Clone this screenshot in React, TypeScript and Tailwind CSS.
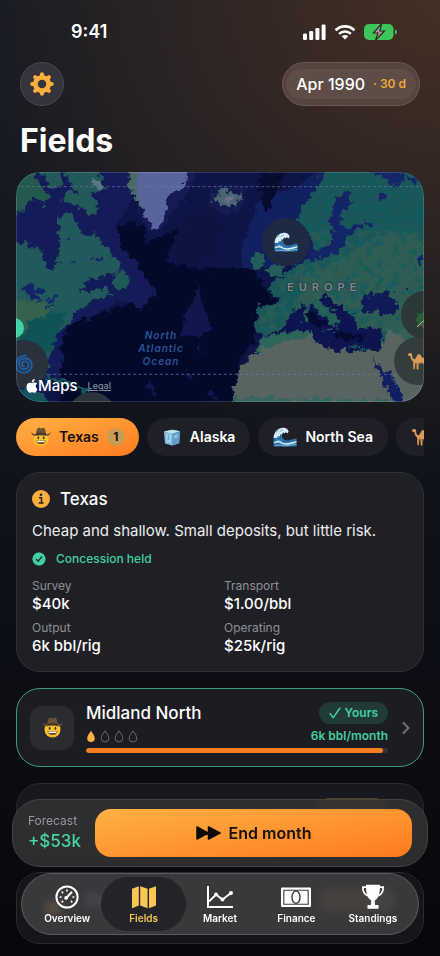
import type { ReactNode } from "react";

interface IconProps {
  className?: string;
}

const Cowboy = ({ className }: IconProps) => (
  <svg viewBox="0 0 20 20" className={className} aria-hidden="true">
    <circle cx="10" cy="12" r="7.6" fill="#f7c331" />
    <path d="M3 14a7.6 7.6 0 0 0 14 0c-1 3-4 4.200-7 4.200S4 17 3 14z" fill="#dd9420" />
    <path d="M.4 5.200c1.400 1.600 3.300 2 4.600 1.800C5.300 3.400 6.200.8 7.600.8c.9 0 1.500.6 2.400.6s1.500-.6 2.400-.6c1.400 0 2.300 2.600 2.600 6.200 1.300.2 3.200-.2 4.600-1.800.2 2.400-2.600 4-5.200 3.600-2.800-.5-6-.5-8.800 0C3 9.200.2 7.600.4 5.200z" fill="#6b5236" />
    <path d="M5 6.600c3-.9 7-.9 10 0v1.200c-3-.8-7-.8-10 0z" fill="#3c2c1d" />
    <ellipse cx="7.300" cy="10.800" rx=".9" ry="1.500" fill="#5a3a10" />
    <ellipse cx="12.700" cy="10.800" rx=".9" ry="1.500" fill="#5a3a10" />
    <path d="M5.200 13.400h9.600c-.4 2.500-2.200 3.700-4.800 3.700s-4.400-1.200-4.800-3.700z" fill="#6d4310" />
    <path d="M5.900 13.800h8.200l-.6 1.400h-7z" fill="#fff" />
  </svg>
);

const Wave = ({ className }: IconProps) => (
  <svg viewBox="0 0 24 20" className={className} aria-hidden="true">
    <path d="M.5 19.500V11C1.200 4 6 .4 11 .8c2.400.2 4.200 1.800 4.600 4l-2 .6C11 4.600 8.800 6 9 9c.2 3 3 4.800 6.600 4.400 2.800-.3 5-2 8-1.800v7.900z" fill="#2c6eaa" />
    <path d="M.5 11C1.200 4 6 .4 11 .8c2.400.2 4.200 1.800 4.600 4l-1.200 1.600-1.500-1.300-1.300 1.400-1.600-1.200-1 2.200-1.800-.3-.4 2.300-2-.2-.8 2-1.600-.6z" fill="#d8edf5" />
    <path d="M3 5.400l3-2.600M6.500 4.800L10 2.600" stroke="#5c9fc9" strokeWidth=".8" fill="none" />
    <path d="M1 16c3-2 5-1.600 8 .2 4 2 8 .4 14.500-1.600" stroke="#d5edf7" strokeWidth="1.500" fill="none" />
    <path d="M2 18.600c5-1.200 8 .6 12 .2 4-.6 6-1.400 9.500-1.400" stroke="#7db9db" strokeWidth="1" fill="none" />
    <path d="M4 12.600c1 1.200 3 1.800 4.400 1.600" stroke="#8ec6e2" strokeWidth="1" fill="none" />
  </svg>
);

const Ice = ({ className }: IconProps) => (
  <svg viewBox="0 0 20 20" className={className} aria-hidden="true">
    <path d="M2 4.400l8.500-1.600L18 4.200l-.8 12L10 18.600 3 16.400z" fill="#86bddd" />
    <path d="M2 4.400l8.500-1.600L18 4.200 10.600 6.400z" fill="#c2e3f2" />
    <path d="M10.600 6.400L18 4.200l-.8 12-7.200 2.400z" fill="#5f9cc8" />
    <path d="M4 7l5 1-.4 7.400L4.600 14z" fill="#a9d5ea" />
    <path d="M12 8.400l4.200-1.400-.4 3.400-3.600 1z" fill="#8ec4e2" />
    <path d="M5 11.600l3 .6M6.400 7.600v5" stroke="#5c9bc6" strokeWidth=".8" />
  </svg>
);

const Camel = ({ className }: IconProps) => (
  <svg viewBox="0 0 22 20" className={className} aria-hidden="true">
    <path d="M1 3.200C2 1.600 4.400 1.500 5 3c.4 1.200 0 3.600 1.200 4.800.8.8 1.600.4 2.400-.4 1-1.600 1.600-4.200 3.200-4.400 1.800-.2 2.600 3.400 4.600 4 2.400.6 4 1.800 4 4.600l-.6 2-.6-1.800-.6 1 .6 5.600h-1.600l-.8-5.400-1.800-1.400-3.400.6-.2 6.200H9.800l-.4-6-1-.6-.6 6.400H6.400l-.2-7.400C4.200 9.400 3.600 7.200 3.400 5L1.200 4.800z" fill="#dc9a58" />
    <path d="M8 11.600c3 1.400 6 1 9-.4l-1 1.400-3.400.6-3.200.4z" fill="#ab6c36" />
  </svg>
);

const Cyclone = ({ className }: IconProps) => (
  <svg viewBox="0 0 20 20" className={className} fill="none" stroke="#1f5fa5" strokeWidth="1.900" strokeLinecap="round" aria-hidden="true">
    <path d="M12 1.400C6 1.400 2.600 5 2.600 9.600M2 11.400c0 4.400 3.400 7.200 7.800 7.200 4.600 0 8-3.200 8-7.600 0-4-3-6.800-6.800-6.800C7.400 4.200 5 6.800 5 10c0 3 2.200 5.200 5 5.200 2.600 0 4.600-1.800 4.600-4.200 0-2.200-1.600-3.600-3.600-3.600-1.800 0-3 1.200-3 2.800 0 1.400 1 2.200 2.200 2.200" />
  </svg>
);

const Palm = ({ className }: IconProps) => (
  <svg viewBox="0 0 20 20" className={className} aria-hidden="true">
    <path d="M0 10l3-2-1-4 4 1 3-4 1 4 4 1-3 3 1 4-3 1 0 4-3-1-4 1 1-4z" fill="#2f5c38" />
    <path d="M2 18L15 6" stroke="#b9b7a3" strokeWidth="1" />
    <path d="M6 17l12-6v8H8z" fill="#6c423c" />
  </svg>
);

/* map, drawn on a 1224 x 690 canvas */
const WorldMap = () => (
  <svg viewBox="48 21 1224 690" preserveAspectRatio="xMidYMid slice" className="block h-full w-full" aria-hidden="true">
    <defs>
      <filter id="coast" x="-5%" y="-5%" width="110%" height="110%" colorInterpolationFilters="sRGB">
        <feTurbulence type="fractalNoise" baseFrequency="0.05" numOctaves="4" seed="4" result="n" />
        <feDisplacementMap in="SourceGraphic" in2="n" scale="36" xChannelSelector="R" yChannelSelector="G" />
      </filter>
      <filter id="patches" x="0" y="0" width="100%" height="100%" colorInterpolationFilters="sRGB">
        <feTurbulence type="fractalNoise" baseFrequency="0.035" numOctaves="4" seed="9" />
        <feColorMatrix values="0 0 0 0 0.19  0 0 0 0 0.38  0 0 0 0 0.33  16 0 0 0 -7.4" />
      </filter>
      <filter id="teal" x="0" y="0" width="100%" height="100%" colorInterpolationFilters="sRGB">
        <feTurbulence type="fractalNoise" baseFrequency="0.04" numOctaves="4" seed="21" />
        <feColorMatrix values="0 0 0 0 0.05  0 0 0 0 0.37  0 0 0 0 0.38  12 0 0 0 -6.8" />
      </filter>
      <clipPath id="europe">
        <path d="M985 21 940 80 895 150 905 190 935 220 950 285 890 305 835 355 850 415 780 430 780 500 1272 500 1272 21z" />
      </clipPath>
    </defs>
    <rect x="0" y="0" width="1320" height="740" fill="#0c1546" />
    <g filter="url(#coast)">
      <path d="M20 0H410L400 100 350 185 362 235 405 290 445 345 472 375 440 415 410 435 370 405 300 440 215 480 190 540 190 640 20 740z" fill="#131c58" />
      <path d="M400 90 440 190 480 200 530 130 580 60 600 0H380z" fill="#131c55" />
      <path d="M640 60 740 60 730 130 680 150 620 130z" fill="#131c50" />
      <path d="M780 100 900 60 980 0 1100 0 1000 300 800 300 730 330 720 260z" fill="#13205f" />
      <path d="M350 185 390 170 435 190 440 235 500 205 540 190 515 240 500 290 590 310 660 310 760 310 810 390 830 415 765 420 765 530 710 590 700 730H180L185 520 215 475 300 445 400 412 420 438 470 380 440 340 400 280 360 235z" fill="#020a2c" />
      <path d="M510 245 560 150 640 130 680 190 650 270 590 305 530 290z" fill="#0e1342" />
      <path d="M780 21H860L820 100 800 145 785 120z" fill="#060c30" />
      <path d="M590 345 610 420 635 490 600 520 555 505 540 530 560 440 585 400z" fill="#11174c" />
      <path d="M590 540 600 560M445 650 460 690M630 680 645 700M560 620 575 640" stroke="#11174c" strokeWidth="14" />
    </g>

    {/* north america */}
    <g filter="url(#coast)">
      <path d="M20 235H80L130 260 140 310 165 320 170 270 185 240 175 200 180 150 210 145 240 190 270 220 285 195 310 240 345 275 362 300 355 325 310 335 260 345 235 380 270 378 320 365 335 385 300 400 250 425 215 460 190 490 165 525 150 560 152 610 138 605 128 565 20 565z" fill="#22595a" />
      <path d="M20 430 90 410 160 440 200 440 165 530 150 560H20z" fill="#105356" />
      <path d="M20 410 130 410 160 430 140 450 90 470 60 520 20 520z" fill="#34624f" />
      <path d="M20 10H100L110 45 145 90 130 125 100 95 62 140 20 150z" fill="#24594f" />
      <path d="M120 10H180L190 60 150 70z" fill="#22585a" />
      <path d="M195 10 290 10 315 65 275 90 297 130 285 158 240 130 210 112 180 112 195 82 230 80 205 50z" fill="#24595a" />
      <path d="M270 35 310 55 305 75 280 60z" fill="#5b7686" />
      <path d="M340 355 362 315 388 345 385 375 345 370z" fill="#1f5a58" />
      <path d="M60 372 100 355 112 372 140 382 110 390 130 412 102 402 95 418 85 390z" fill="#15246a" />
      <path d="M140 408 175 398M135 432 165 420M180 290 190 300M210 285 225 290M270 285 280 278M290 280 300 290M200 220 210 226" stroke="#15246a" strokeWidth="7" />
      <path d="M240 380 270 352 310 345 300 360 280 370z" fill="#101c58" />
      <path d="M130 630 180 645 225 655 200 662 150 648zM235 665 275 668 270 682 240 676z" fill="#14585a" />
      <path d="M20 670 100 675 140 700V740H20z" fill="#13555a" />
    </g>

    {/* greenland, iceland */}
    <g filter="url(#coast)">
      <path d="M388 0H430L422 130 400 90 385 60z" fill="#4a6a66" />
      <path d="M412 0H578L552 62 502 100 494 145 478 190 455 184 435 150 418 110 408 70z" fill="#59659a" />
      <path d="M645 90 662 72 690 84 722 85 722 105 690 127 660 120 640 105z" fill="#4c6472" />
      <path d="M675 98 700 92 700 108 680 112z" fill="#736f8a" />
    </g>

    {/* europe, africa, middle east */}
    <g filter="url(#coast)">
      <path d="M985 0 940 80 895 150 900 190 930 210 945 250 940 285 880 300 850 330 815 355 800 372 838 400 828 420 768 420 768 505 800 512 1272 580 1330 560V0z" fill="#1b5658" />
      <path d="M755 275 780 265 792 290 775 315 757 310zM800 305 830 292 855 318 842 330 800 337z" fill="#235c58" />
      <path d="M760 575 790 510 930 492 940 525 850 550z" fill="#2c665a" />
    </g>
    <g clipPath="url(#europe)">
      <path d="M900 330 1000 300 1090 240 1180 200 1272 230V500H1080L900 420z" fill="#2e5b55" filter="url(#coast)" />
      <rect x="760" y="200" width="520" height="300" filter="url(#patches)" opacity="0.6" />
      <rect x="760" y="21" width="520" height="480" filter="url(#teal)" opacity="0.6" />
    </g>
    <g filter="url(#coast)">
      <path d="M758 572 800 550 850 530 935 515 980 550 1050 560 1140 555 1160 500 1340 500V760H698L705 650 722 600z" fill="#586462" />
      <path d="M1160 495 1310 480V560L1220 530z" fill="#346059" />
      <path d="M690 705 800 695 880 705 960 698 1060 708 1180 703V740H690z" fill="#32665f" />
      <path d="M760 528 800 508 835 498 865 470 885 430 940 418 985 440 1012 485 1022 465 960 402 975 390 1045 440 1055 485 1045 455 1062 455 1078 488 1110 495 1147 490 1145 548 1130 558 1055 540 1020 565 990 548 940 522 932 495 870 500 800 512z" fill="#0d1551" />
      <path d="M925 435 940 460 960 480 985 470M1000 500 1040 515 1090 515" stroke="#050b30" strokeWidth="18" fill="none" />
      <path d="M912 425 922 425 922 445 912 445zM908 452 922 450 922 472 910 472zM975 492 1000 490 995 502z" fill="#24605a" />
      <path d="M935 412 960 412 1000 452 1022 470 1006 492 990 462 950 435z" fill="#24605a" />
      <path d="M1083 412 1110 382 1140 392 1150 378 1178 372 1166 395 1198 425 1182 450 1130 442 1090 440z" fill="#0f1a57" />
      <path d="M1112 565 1128 590 1180 640 1208 690V740H1190L1150 645z" fill="#101e62" />
      <path d="M1015 90 1042 78 1057 90 1050 112 1022 150 1018 180 1032 190 1085 178 1088 192 1040 206 1035 235 1010 262 970 278 935 285 930 265 962 250 990 240 1000 210 988 170 995 145z" fill="#142468" />
      <path d="M1120 20 1145 35 1190 65 1210 50 1205 20H1240L1235 0H1120zM1145 80 1165 90 1150 115 1130 105zM1100 162 1122 182 1115 192 1098 180z" fill="#152668" />
      <path d="M1225 35 1250 50M1255 275 1262 310M1215 370 1225 372" stroke="#152668" strokeWidth="14" />
    </g>
    <path d="M48 65H1272M48 628H1272" stroke="#6d7ba6" strokeOpacity=".65" strokeWidth="3" strokeDasharray="9 7" />
  </svg>
);

interface ChipProps {
  label: string;
  icon: ReactNode;
}

const Chip = ({ label, icon }: ChipProps) => (
  <button className="flex h-[38px] shrink-0 items-center gap-2 rounded-full bg-[#1f2027] px-[15px] text-sm font-semibold">
    {icon}
    {label}
  </button>
);

const Stat = ({ label, value }: { label: string; value: string }) => (
  <div>
    <dt className="text-xs text-[#8f9095]">{label}</dt>
    <dd className="text-[15px] leading-5 font-medium">{value}</dd>
  </div>
);

const drop = "M5 .8C6.600 3.400 8.800 5.900 8.800 8.200A3.800 3.800 0 0 1 1.200 8.200C1.200 5.900 3.400 3.400 5 .8z";

const Tab = ({ label, active, children }: { label: string; active?: boolean; children: ReactNode }) => (
  <a
    href="#"
    aria-current={active ? "page" : undefined}
    className={
      active
        ? "-mx-1 flex h-[54px] flex-[84] flex-col items-center justify-center gap-0.5 rounded-full bg-[#232328]/95 text-[#f7c754]"
        : "flex h-[54px] flex-[76] flex-col items-center justify-center gap-0.5 text-white"
    }
  >
    <svg viewBox="0 0 30 26" className="h-[26px] w-[30px]" fill="none" stroke="currentColor" strokeWidth="2" aria-hidden="true">
      {children}
    </svg>
    <span className="text-[10px] leading-3 font-semibold">{label}</span>
  </a>
);

export default function App() {
  return (
    <div className="min-h-screen overflow-hidden bg-[radial-gradient(ellipse_500px_460px_at_100%_0%,#452f24_0%,#452f2400_100%),linear-gradient(180deg,#151a24_0%,#14171f_35%,#0e1017_60%,#07080c_100%)] font-['Inter','Liberation_Sans',sans-serif] text-white">
      <div className="flex items-center justify-between pt-5 pr-[43px] pl-[71px]">
        <span className="text-lg leading-6 font-semibold">9:41</span>
        <div className="flex items-center gap-2">
          <svg viewBox="0 0 23 16" className="h-4 w-[23px]" fill="#fff" aria-hidden="true">
            <rect y="9.500" width="4" height="6.500" rx="1.200" />
            <rect x="6.200" y="7" width="4" height="9" rx="1.200" />
            <rect x="12.400" y="4" width="4" height="12" rx="1.200" />
            <rect x="18.600" y=".5" width="4" height="15.500" rx="1.200" />
          </svg>
          <svg viewBox="0 0 22 16" className="h-4 w-[22px]" fill="none" stroke="#fff" strokeWidth="2.700" aria-hidden="true">
            <path d="M1.600 6.200a13.400 13.400 0 0 1 18.800 0M5.100 9.900a8.400 8.400 0 0 1 11.800 0" />
            <path d="M11 15.600 7.600 12.300a4.800 4.800 0 0 1 6.800 0z" fill="#fff" stroke="none" />
          </svg>
          <svg viewBox="0 0 33 16" className="h-4 w-[33px]" aria-hidden="true">
            <rect width="29.500" height="16" rx="5" fill="#3cc65a" />
            <path d="M31 5.500c1.300.4 2 1.300 2 2.500s-.7 2.100-2 2.500z" fill="#3cc65a" />
            <path d="M17.800-.4 9.400 9h4.600l-2.600 7.400L20.400 7h-4.600z" fill="#a49d97" stroke="#2c2522" strokeWidth="1.200" />
          </svg>
        </div>
      </div>

      <main className="flex flex-col gap-4 px-4 pb-3">
        <div>
          <header className="flex items-center justify-between px-1 pt-[18px]">
            <button aria-label="Settings" className="flex size-11 items-center justify-center rounded-full border border-[#4a4952] bg-[#33343e]">
              <svg viewBox="-12 -12 24 24" className="size-6" aria-hidden="true">
                <circle r="6.700" fill="none" stroke="#fbae3c" strokeWidth="4.800" />
                <path d="M0-9.800V-8M0 9.800V8M-9.800 0H-8M9.800 0H8M-6.900-6.900-6-6M6.900-6.900 6-6M-6.900 6.900-6 6M6.900 6.900 6 6" stroke="#fbae3c" strokeWidth="4" strokeLinecap="round" />
              </svg>
            </button>
            <button className="h-11 rounded-full border border-[#6b5954] bg-[#54433e] px-[3px]">
              <span className="flex h-[30px] items-center gap-2 rounded-full bg-[#5e4c47] px-2.5">
                <span className="text-base font-medium">Apr 1990</span>
                <span className="text-xs font-semibold text-[#f0a83e]">· 30 d</span>
              </span>
            </button>
          </header>
          <h1 className="px-1 pt-3.5 pb-2.5 text-[32px] leading-[42px] font-bold">Fields</h1>
          <section aria-label="Map" className="relative h-[230px] overflow-hidden rounded-3xl">
            <WorldMap />
            <p className="absolute top-[157px] left-[145px] -translate-x-1/2 text-center text-[10px] leading-[13px] font-semibold tracking-widest text-[#2f5496] italic">
              North
              <br />
              Atlantic
              <br />
              Ocean
            </p>
            <p className="absolute top-[107px] left-[271px] text-[11px] leading-4 font-semibold tracking-[5px] text-[#85868c] [text-shadow:0_0_2px_#111827]">EUROPE</p>
            <button aria-label="North Sea" className="absolute top-[46px] left-[246px] flex size-12 items-center justify-center rounded-full bg-[#1d2a41]">
              <Wave className="h-5 w-6" />
            </button>
            <span className="absolute top-[146px] -left-3 size-5 rounded-full bg-[#3cd3a4]" />
            <button aria-label="Gulf" className="absolute top-[168px] -left-4 flex size-12 items-center justify-center rounded-full bg-[#29323c]">
              <Cyclone className="size-5" />
            </button>
            <span className="absolute top-[220px] left-[52px] size-12 rounded-full bg-[#2a323c]" />
            <button aria-label="Caspian" className="absolute top-[119px] -right-[25px] flex size-12 items-center justify-center rounded-full bg-[#2b3839] pt-2">
              <Palm className="size-5" />
            </button>
            <button aria-label="Gulf States" className="absolute top-[165px] -right-[18px] flex size-12 items-center justify-center rounded-full bg-[#333d3e]">
              <Camel className="h-5 w-[22px]" />
            </button>
            <div className="absolute bottom-2 left-2.5 flex items-center gap-2.5">
              <span className="flex items-center text-[15px] leading-4 font-medium">
                <svg viewBox="0 0 12 14" className="h-3.5 w-3" fill="#fff" aria-hidden="true">
                  <path d="M8.600.1c.1 1-.3 1.800-.8 2.400-.5.600-1.300 1-2 1-.1-.9.300-1.800.8-2.400C7.100.6 7.900.2 8.600.1zM11.200 4.800c-1 .6-1.500 1.400-1.500 2.500 0 1.200.7 2.200 1.800 2.600-.4 1.200-1.600 3.900-2.900 3.900-.9 0-1.300-.5-2.300-.5s-1.500.5-2.300.5C2.500 13.800.5 10.600.5 7.900c0-2.700 1.700-4.200 3.400-4.200 1 0 1.800.6 2.400.6s1.500-.7 2.700-.7c.9 0 1.700.4 2.200 1.200z" />
                </svg>
                Maps
              </span>
              <a href="#" className="text-[9px] leading-4 font-medium text-[#858b99] underline">
                Legal
              </a>
            </div>
            <div className="pointer-events-none absolute inset-0 rounded-3xl border border-white/15" />
          </section>
        </div>

        <nav aria-label="Regions" className="flex gap-2 overflow-hidden">
          <button className="flex h-[38px] shrink-0 items-center gap-2 rounded-full bg-gradient-to-br from-[#ffb042] to-[#ff7a1c] pr-3.5 pl-[15px] text-sm font-semibold text-[#14100c]">
            <Cowboy className="size-5" />
            Texas
            <span className="flex size-[18px] items-center justify-center rounded-full bg-[#c99c55] text-xs font-bold">1</span>
          </button>
          <Chip label="Alaska" icon={<Ice className="size-5" />} />
          <Chip label="North Sea" icon={<Wave className="h-5 w-6" />} />
          <button aria-label="Gulf States" className="h-[38px] w-36 shrink-0 rounded-full bg-[#1f2027] px-[15px]">
            <Camel className="h-5 w-[22px]" />
          </button>
        </nav>

        <section className="rounded-3xl border border-[#303138] bg-[#1f2026] px-[15px] pt-3.5 pb-[15px]">
          <h2 className="flex items-center gap-2.5 text-[17px] leading-6 font-medium">
            <svg viewBox="0 0 18 18" className="size-[18px]" aria-hidden="true">
              <circle cx="9" cy="9" r="9" fill="#fbae3c" />
              <circle cx="9" cy="4.700" r="1.300" fill="#1f2026" />
              <path d="M7 7.700h2.500v5.100M6.600 13h5" stroke="#1f2026" strokeWidth="1.500" fill="none" />
            </svg>
            Texas
          </h2>
          <p className="mt-2.5 text-[15px] leading-5 text-[#ededef]">Cheap and shallow. Small deposits, but little risk.</p>
          <p className="mt-2.5 flex items-center gap-2.5 text-xs font-medium text-[#41d0a2]">
            <svg viewBox="-7 -7 14 14" className="size-3.5" aria-hidden="true">
              <circle r="5.800" fill="#41d0a2" />
              <path d="M0-6.800 4.800-4.800 6.800 0 4.800 4.800 0 6.800-4.800 4.800-6.800 0-4.800-4.800zM-2.600-6.200 2.600-6.200 6.200-2.600 6.200 2.600 2.600 6.200-2.600 6.200-6.200 2.600-6.200-2.600z" fill="#41d0a2" />
              <path d="M-2.600.4-.8 2.300 2.600-2.200" fill="none" stroke="#1f2026" strokeWidth="1.300" strokeLinecap="round" />
            </svg>
            Concession held
          </p>
          <dl className="mt-[11px] grid grid-cols-2 gap-x-2 gap-y-1.5">
            <Stat label="Survey" value="$40k" />
            <Stat label="Transport" value="$1.00/bbl" />
            <Stat label="Output" value="6k bbl/rig" />
            <Stat label="Operating" value="$25k/rig" />
          </dl>
        </section>

        <article className="flex items-center gap-3 rounded-3xl border border-[#3a9c82] bg-[#1c1d22] px-[13px] py-[13px]">
          <div className="flex size-11 items-center justify-center rounded-xl bg-[#2b2c31]">
            <Cowboy className="size-[21px]" />
          </div>
          <div className="flex-1">
            <div className="flex h-[22px] items-center justify-between">
              <h3 className="text-[17px] leading-6 font-medium">Midland North</h3>
              <span className="flex h-[22px] items-center gap-1 rounded-full bg-[#213a37] px-2.5 text-xs font-semibold text-[#43cfa2]">
                <svg viewBox="0 0 12 12" className="size-3" fill="none" stroke="currentColor" strokeWidth="1.500" strokeLinecap="round" aria-hidden="true">
                  <path d="M1.200 6.800 4.300 10.600 10.800 1.200" />
                </svg>
                Yours
              </span>
            </div>
            <div className="mt-1 flex h-4 items-center justify-between">
              <div className="flex gap-1" aria-label="Size 1 of 4">
                <svg viewBox="0 0 10 13" className="h-[13px] w-2.5" aria-hidden="true">
                  <path d={drop} fill="#fbb041" />
                </svg>
                {[2, 3, 4].map((n) => (
                  <svg key={n} viewBox="0 0 10 13" className="h-[13px] w-2.5" fill="none" stroke="#6a6b70" strokeWidth="1" aria-hidden="true">
                    <path d={drop} />
                  </svg>
                ))}
              </div>
              <span className="text-xs font-semibold text-[#43cfa2]">6k bbl/month</span>
            </div>
            <div className="mt-1 h-[5px] overflow-hidden rounded-full bg-[#303137]">
              <div className="h-full rounded-full bg-[#f77f22]" style={{ width: "98.500%" }} />
            </div>
          </div>
          <svg viewBox="0 0 8 12" className="ml-0.5 h-3 w-2" fill="none" stroke="#77787d" strokeWidth="1.800" strokeLinecap="round" aria-hidden="true">
            <path d="M1.500 1 6.500 6 1.500 11" />
          </svg>
        </article>

        <article className="flex h-[73px] items-start justify-end rounded-3xl border border-[#2a2b30] bg-[#18191e] px-9 pt-3.5">
          <span className="h-6 w-[70px] rounded-full bg-[#5a421d]" />
        </article>

        <article className="flex h-[72px] items-center gap-6 rounded-3xl border border-[#2a2b30] bg-[#15161a] px-7 pb-4">
          <span className="mt-4 size-4 rounded-full bg-[#c8961c]" />
          <h3 className="flex-1 text-[17px] leading-6 font-medium text-[#c8c8cc]">Odessa</h3>
          <span className="h-6 w-[76px] rounded-full bg-[#6b4c1d]" />
        </article>
      </main>

      {/* bottom bars */}
      <div className="fixed inset-x-0 bottom-[21px] flex flex-col gap-1.5">
        <section className="mx-3 flex items-center gap-3.5 rounded-[28px] border border-[#434446] bg-[#323334]/85 py-[9px] pr-[15px] pl-[15px] backdrop-blur-sm">
          <div>
            <p className="text-xs leading-4 text-[#98999c]">Forecast</p>
            <p className="text-[17px] leading-6 font-medium text-[#46d6a5]">+$53k</p>
          </div>
          <button className="flex h-12 flex-1 items-center justify-center gap-2 rounded-2xl bg-gradient-to-br from-[#ffb042] to-[#ff7a1c] text-base font-semibold text-[#14100c]">
            <svg viewBox="0 0 25 14" className="h-3.5 w-[25px]" fill="#0d0a08" stroke="#0d0a08" strokeWidth="1.500" strokeLinejoin="round" aria-hidden="true">
              <path d="M1 1 12 7 1 13zM12.500 1 24 7 12.500 13z" />
            </svg>
            End month
          </button>
        </section>

        <nav aria-label="Main" className="mx-[21px] flex h-[62px] items-center rounded-full border border-[#5b5c5f] bg-[#3f4043]/85 px-[7px] backdrop-blur-[3px]">
          <Tab label="Overview">
            <circle cx="15" cy="13" r="10.600" />
            <path d="M13.600 14.400 19.400 8.400" strokeWidth="2.200" strokeLinecap="round" />
            <circle cx="14.200" cy="13.800" r="1.900" fill="currentColor" stroke="none" />
            <path d="M15 6.200V6.800M10.200 8.200 10.600 8.600M8.300 13H8.900M10.200 17.800 10.600 17.400M21.100 13H21.700M19.400 17.400 19.800 17.800" strokeWidth="1.700" strokeLinecap="round" />
          </Tab>
          <Tab label="Fields" active>
            <path d="M3 4.800 9.800 2.200V21.600L3 24.200zM11.200 2.200 18.600 4.800V24.200L11.200 21.600zM20 4.800 27 2.200V21.600L20 24.200z" fill="currentColor" stroke="none" />
          </Tab>
          <Tab label="Market">
            <path d="M3 2V23H28M4 17.500 11 10.500 17.500 15.500 26 9" />
            <circle cx="11" cy="10.500" r="2" fill="currentColor" stroke="none" />
            <circle cx="17.500" cy="15.500" r="2" fill="currentColor" stroke="none" />
            <circle cx="26" cy="9" r="2" fill="currentColor" stroke="none" />
          </Tab>
          <Tab label="Finance">
            <rect x="0" y="3.500" width="30" height="19.500" rx="1" fill="currentColor" stroke="none" />
            <path d="M2.800 6.300H27.200V20.200H2.800z" stroke="#3b3c3f" strokeWidth="1.100" />
            <ellipse cx="15" cy="13.200" rx="4" ry="6.200" fill="#fff" stroke="#3b3c3f" strokeWidth="1.400" />
          </Tab>
          <Tab label="Standings">
            <path d="M8 .8H22V3C22 10 20 14.500 17 16.300 16.600 18.500 16.800 20 17.200 21H20.500V24.800H9.500V21H12.800C13.200 20 13.400 18.500 13 16.300 10 14.500 8 10 8 3z" fill="currentColor" stroke="none" />
            <path d="M8.500 3.200H4.800C4.800 8 7 11 11 12M21.500 3.200H25.200C25.200 8 23 11 19 12" strokeWidth="1.700" />
          </Tab>
        </nav>
      </div>
    </div>
  );
}
